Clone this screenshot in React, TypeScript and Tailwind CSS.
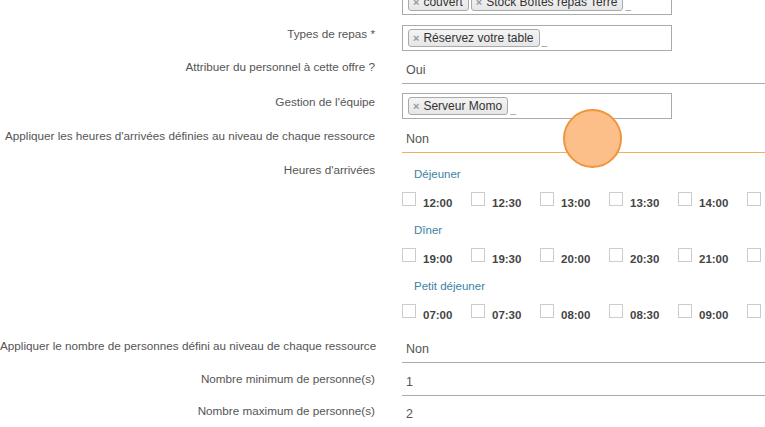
import type { ReactNode } from 'react';

const meals = [
  { name: 'Déjeuner', times: ['12:00', '12:30', '13:00', '13:30', '14:00', '14:30'] },
  { name: 'Dîner', times: ['19:00', '19:30', '20:00', '20:30', '21:00', '21:30'] },
  { name: 'Petit déjeuner', times: ['07:00', '07:30', '08:00', '08:30', '09:00', '09:30'] },
];

function Row({ label, children, className = '' }: { label?: string; children: ReactNode; className?: string }) {
  return (
    <div className={`flex ${className}`}>
      <div className="w-[375px] shrink-0 pt-[2px] text-right text-[11.7px] leading-[14px] whitespace-nowrap text-[#555]">{label}</div>
      <div className="ml-[27px] min-w-0 flex-1">{children}</div>
    </div>
  );
}

function Tag({ text }: { text: string }) {
  return (
    <span className="mr-[2px] inline-flex h-[18px] items-center rounded-[3px] border border-[#aaa] bg-gradient-to-b from-[#f4f4f4] to-[#e6e6e6] pl-[4px] pr-[5px] text-[12px] text-[#333]">
      <span className="mr-[4px] text-[11px] font-bold leading-none text-[#999]">×</span>
      {text}
    </span>
  );
}

function MultiSelect({ tags }: { tags: string[] }) {
  return (
    <div className="flex h-[26px] w-[270px] items-center border border-[#aaa] bg-white pl-[5px]">
      {tags.map((t) => (
        <Tag key={t} text={t} />
      ))}
      <span className="mt-[8px] text-[10px] leading-none text-[#999]">_</span>
    </div>
  );
}

function TextField({ value, active = false }: { value: string; active?: boolean }) {
  return (
    <div className={`flex h-[26px] items-center border-b pl-[4px] text-[12.5px] text-[#555] ${active ? 'border-[#f0b060]' : 'border-[#aaa]'}`}>
      {value}
    </div>
  );
}

export default function App() {
  return (
    <div className="relative h-[427px] w-[765px] overflow-hidden bg-white font-['Liberation_Sans',Arial,sans-serif]">
      <div className="-mt-[11px]">
        <Row>
          <MultiSelect tags={['couvert', 'Stock Boîtes repas Terre']} />
        </Row>
        <Row label="Types de repas *" className="mt-[10px]">
          <MultiSelect tags={['Réservez votre table']} />
        </Row>
        <Row label="Attribuer du personnel à cette offre ?" className="mt-[7px]">
          <TextField value="Oui" />
        </Row>
        <Row label="Gestion de l'équipe" className="mt-[9px]">
          <MultiSelect tags={['Serveur Momo']} />
        </Row>
        <Row label="Appliquer les heures d'arrivées définies au niveau de chaque ressource" className="mt-[8px]">
          <TextField value="Non" active />
        </Row>
        <Row label="Heures d'arrivées" className="mt-[8px]">
          <div className="overflow-hidden whitespace-nowrap pb-[4px]">
            {meals.map((m, i) => (
              <div key={m.name}>
                <div className={`${i === 0 ? 'mt-[6px]' : 'mt-[17px]'} pl-[12px] text-[11.5px] leading-[14px] text-[#3d7fa6]`}>{m.name}</div>
                <div className="mt-[11px] flex">
                  {m.times.map((t) => (
                    <div key={t} className="flex w-[69px] shrink-0 items-end">
                      <span className="h-[14px] w-[14px] shrink-0 border border-[#ccc] bg-white" />
                      <span className="ml-[7px] translate-y-[3px] text-[11.5px] font-bold leading-[11px] text-[#444]">{t}</span>
                    </div>
                  ))}
                </div>
              </div>
            ))}
          </div>
        </Row>
        <Row label="Appliquer le nombre de personnes défini au niveau de chaque ressource" className="mt-[15px]">
          <TextField value="Non" />
        </Row>
        <Row label="Nombre minimum de personne(s)" className="mt-[7px]">
          <TextField value="1" />
        </Row>
        <Row label="Nombre maximum de personne(s)" className="mt-[6px]">
          <TextField value="2" />
        </Row>
      </div>

      {/* click highlight */}
      <div className="pointer-events-none absolute left-[563px] top-[109px] h-[59px] w-[59px] rounded-full border-2 border-[#f0953a] bg-[#fcbf8a]" />
    </div>
  );
}
